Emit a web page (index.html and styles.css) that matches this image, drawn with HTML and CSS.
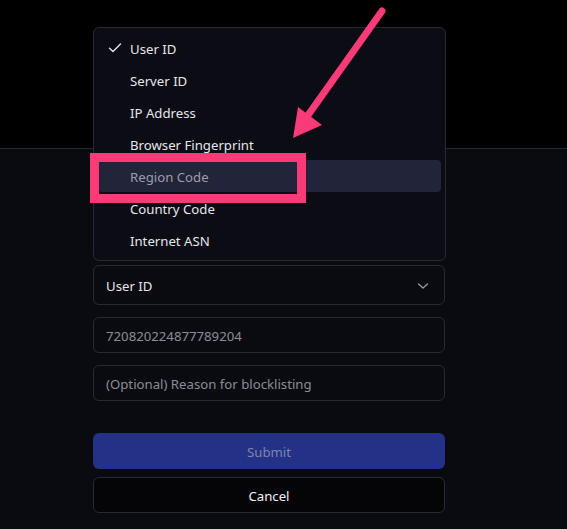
FILE: index.html
```html
<!DOCTYPE html>
<html>
<head>
<meta charset="utf-8">
<link rel="stylesheet" href="styles.css">
</head>
<body>
<div class="top"></div>
<div class="form">
  <div class="select">
    <span>User ID</span>
    <svg class="chev" width="12" height="8" viewBox="0 0 12 8"><path d="M1.5 2 L6 6 L10.5 2" fill="none" stroke="#9a9ca8" stroke-width="1.3" stroke-linecap="round" stroke-linejoin="round"/></svg>
  </div>
  <div class="input value">720820224877789204</div>
  <div class="input">(Optional) Reason for blocklisting</div>
  <div class="btn submit">Submit</div>
  <div class="btn cancel">Cancel</div>
</div>
<div class="menu">
  <div class="item"><svg class="check" width="14" height="12" viewBox="0 0 14 12"><path d="M1.5 6.2 L5 9.6 L12.5 2" fill="none" stroke="#e6e6eb" stroke-width="1.4" stroke-linecap="round" stroke-linejoin="round"/></svg>User ID</div>
  <div class="item">Server ID</div>
  <div class="item">IP Address</div>
  <div class="item">Browser Fingerprint</div>
  <div class="item active">Region Code</div>
  <div class="item">Country Code</div>
  <div class="item">Internet ASN</div>
</div>
<svg class="annot" width="567" height="529" viewBox="0 0 567 529">
  <rect x="94.5" y="157.5" width="207" height="41" fill="none" stroke="#fb3a78" stroke-width="9"/>
  <line x1="382" y1="11" x2="306" y2="118" stroke="#fb3a78" stroke-width="7" stroke-linecap="round"/>
  <polygon points="293,138 298,107 322,125" fill="#fb3a78"/>
</svg>
</body>
</html>
```
FILE: styles.css
```css
html, body {
  margin: 0;
  padding: 0;
}
body {
  background: #0a0b11;
  font-family: "Noto Sans", "Open Sans", sans-serif;
  font-size: 13.2px;
  color: #e6e6eb;
  width: 567px;
  height: 529px;
  overflow: hidden;
  position: relative;
}
.top {
  height: 148px;
  background: #000;
  border-bottom: 1px solid #262833;
}
.form {
  margin-left: 93px;
  width: 352px;
  padding-top: 116px;
  display: flex;
  flex-direction: column;
}
.select {
  height: 40px;
  box-sizing: border-box;
  border: 1px solid #272a35;
  border-radius: 6px;
  display: flex;
  align-items: center;
  justify-content: space-between;
  padding: 1px 15px 0 12px;
  color: #e6e6eb;
}
.input {
  margin-top: 12px;
  height: 36px;
  box-sizing: border-box;
  border: 1px solid #272a35;
  border-radius: 6px;
  display: flex;
  align-items: center;
  padding: 1px 12px 0;
  color: #8a8c98;
}
.btn {
  height: 36px;
  box-sizing: border-box;
  border-radius: 6px;
  display: flex;
  align-items: center;
  justify-content: center;
  padding-top: 1px;
}
.submit {
  margin-top: 32px;
  background: #233186;
  color: #7f84ad;
}
.cancel {
  margin-top: 8px;
  border: 1px solid #272a35;
  background: #050508;
  color: #f2f2f5;
}
.menu {
  position: absolute;
  left: 93px;
  top: 27px;
  width: 353px;
  box-sizing: border-box;
  border: 1px solid #272a35;
  border-radius: 6px;
  background: #0b0c14;
  padding: 4px;
}
.item {
  height: 32px;
  box-sizing: border-box;
  display: flex;
  align-items: center;
  padding: 1px 0 0 32px;
  position: relative;
  border-radius: 4px;
  color: #e6e6eb;
}
.item.active {
  background: #22243a;
  color: #9b9dab;
}
.check {
  position: absolute;
  left: 10px;
  top: 10px;
}
.annot {
  position: absolute;
  left: 0;
  top: 0;
}
```
